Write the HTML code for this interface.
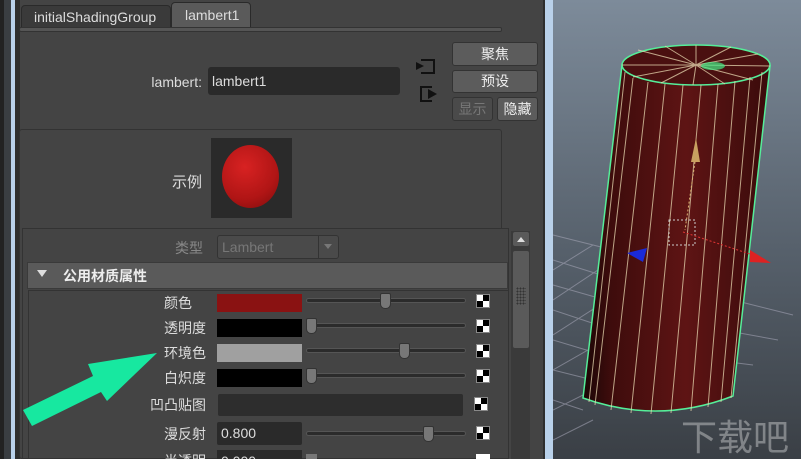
<!DOCTYPE html>
<html><head><meta charset="utf-8"><style>
*{margin:0;padding:0;box-sizing:border-box}
html{width:801px;height:459px;overflow:hidden}
body{width:801px;height:459px;overflow:hidden;background:#444;font-family:"Liberation Sans","Noto Sans CJK SC",sans-serif;position:relative;color:#ddd}
.a{position:absolute}
.lbl{position:absolute;font-size:14px;color:#ddd;text-align:right;width:120px}
.sw{position:absolute;left:217px;width:85px;height:18px}
.sl{position:absolute;left:306px;width:160px;height:5px;background:#2b2b2b;border:1px solid #555;border-radius:3px}
.kn{position:absolute;width:11px;height:16px;background:#777;border:1px solid #333;border-radius:2px 2px 5px 5px}
.ck{position:absolute;left:476px;width:14px;height:14px;background:conic-gradient(#000 0 25%,#fff 0 50%,#000 0 75%,#fff 0);border:1px solid #888}
.btn{position:absolute;background:#5c5c5c;border:1px solid #333;border-radius:3px;font-size:14px;text-align:center;color:#eee}
</style></head><body>
<div class="a" style="left:0;top:0;width:4px;height:459px;background:#222"></div>
<div class="a" style="left:4px;top:0;width:7px;height:459px;background:#3a3e42"></div>
<div class="a" style="left:11px;top:0;width:4px;height:459px;background:#b9d1ea"></div>
<div class="a" style="left:15px;top:0;width:5px;height:459px;background:#2e2e2e"></div>
<div class="a" style="left:21px;top:5px;width:150px;height:23px;background:#3a3a3a;border:1px solid #2a2a2a;border-radius:4px 4px 0 0;font-size:14px;padding:3px 0 0 12px;color:#ddd">initialShadingGroup</div>
<div class="a" style="left:171px;top:2px;width:80px;height:26px;background:#5a5a5a;border:1px solid #2a2a2a;border-radius:4px 4px 0 0;font-size:14px;padding:4px 0 0 13px;color:#ddd">lambert1</div>
<div class="a" style="left:19px;top:27px;width:483px;height:5px;background:#555;border:1px solid #333;border-radius:2px"></div>
<div class="a" style="left:130px;top:74px;font-size:14px;width:72px;text-align:right">lambert:</div>
<div class="a" style="left:208px;top:67px;width:192px;height:28px;background:#2a2a2a;border-radius:3px;font-size:14px;padding:6px 0 0 4px">lambert1</div>
<div class="a" style="left:421px;top:59px;width:14px;height:15px;border:2px solid #111;border-left:none"></div>
<div class="a" style="left:416px;top:62px;width:0;height:0;border-left:8px solid #111;border-top:4px solid transparent;border-bottom:4px solid transparent"></div>
<div class="a" style="left:420px;top:86px;width:12px;height:16px;border:2px solid #111;border-right:none"></div>
<div class="a" style="left:428px;top:89px;width:0;height:0;border-left:9px solid #111;border-top:5px solid transparent;border-bottom:5px solid transparent"></div>
<div class="btn" style="left:452px;top:42px;width:86px;height:24px;line-height:22px">聚焦</div>
<div class="btn" style="left:452px;top:70px;width:86px;height:23px;line-height:21px">预设</div>
<div class="btn" style="left:452px;top:97px;width:41px;height:24px;line-height:22px;background:#4a4a4a;color:#777">显示</div>
<div class="btn" style="left:497px;top:97px;width:41px;height:24px;line-height:22px">隐藏</div>
<div class="a" style="left:543px;top:0;width:2px;height:459px;background:#2e2e2e"></div>
<div class="a" style="left:545px;top:0;width:8px;height:459px;background:#b9d1ea"></div>
<div class="a" style="left:19px;top:129px;width:483px;height:330px;border:1px solid #333;border-radius:3px;background:#444"></div>
<div class="a" style="left:172px;top:171px;font-size:15px">示例</div>
<div class="a" style="left:211px;top:138px;width:81px;height:80px;background:#2a2a2a"></div>
<div class="a" style="left:222px;top:145px;width:57px;height:63px;border-radius:50%;background:radial-gradient(circle at 40% 35%,#d82222,#b01515 60%,#7a0c0c)"></div>
<div class="a" style="left:22px;top:228px;width:487px;height:231px;border:1px solid #333;background:#444"></div>
<div class="a" style="left:175px;top:238px;font-size:14px;color:#888">类型</div>
<div class="a" style="left:217px;top:235px;width:122px;height:24px;border:1px solid #333;border-radius:3px;background:#4a4a4a;color:#777;font-size:14px;padding:3px 0 0 4px">Lambert</div>
<div class="a" style="left:318px;top:236px;width:1px;height:22px;background:#333"></div>
<div class="a" style="left:324px;top:244px;border-top:5px solid #777;border-left:4px solid transparent;border-right:4px solid transparent"></div>
<div class="a" style="left:27px;top:262px;width:481px;height:27px;background:#5a5a5a;border:1px solid #3a3a3a"></div>
<div class="a" style="left:37px;top:270px;border-top:7px solid #ddd;border-left:5px solid transparent;border-right:5px solid transparent"></div>
<div class="a" style="left:63px;top:266px;font-size:14px;font-weight:bold;color:#eee">公用材质属性</div>
<div class="a" style="left:28px;top:290px;width:480px;height:169px;border-left:1px solid #333;border-top:1px solid #333"></div>
<div class="a" style="left:511px;top:231px;width:19px;height:228px;background:#3a3a3a"></div>
<div class="a" style="left:513px;top:232px;width:16px;height:14px;background:#5a5a5a;border-radius:2px"></div>
<div class="a" style="left:517px;top:237px;border-bottom:5px solid #ddd;border-left:4px solid transparent;border-right:4px solid transparent"></div>
<div class="a" style="left:513px;top:251px;width:16px;height:97px;background:#5a5a5a;border-radius:2px"></div>
<div class="a" style="left:516px;top:287px;width:10px;height:18px;background:radial-gradient(#333 40%,transparent 45%) 0 0/3px 3px"></div>

<div class="lbl" style="left:72px;top:293px">颜色</div>
<div class="sw" style="top:294px;background:#8a1212"></div>
<div class="sl" style="top:298px"></div><div class="kn" style="left:380px;top:293px"></div>
<div class="ck" style="top:294px"></div>

<div class="lbl" style="left:86px;top:318px">透明度</div>
<div class="sw" style="top:319px;background:#000"></div>
<div class="sl" style="top:323px"></div><div class="kn" style="left:306px;top:318px"></div>
<div class="ck" style="top:319px"></div>

<div class="lbl" style="left:86px;top:343px">环境色</div>
<div class="sw" style="top:344px;background:#a0a0a0"></div>
<div class="sl" style="top:348px"></div><div class="kn" style="left:399px;top:343px"></div>
<div class="ck" style="top:344px"></div>

<div class="lbl" style="left:86px;top:368px">白炽度</div>
<div class="sw" style="top:369px;background:#000"></div>
<div class="sl" style="top:373px"></div><div class="kn" style="left:306px;top:368px"></div>
<div class="ck" style="top:369px"></div>

<div class="lbl" style="left:86px;top:395px">凹凸贴图</div>
<div class="a" style="left:218px;top:394px;width:245px;height:22px;background:#2d2d2d;border-radius:2px"></div>
<div class="ck" style="top:397px;left:474px"></div>

<div class="lbl" style="left:86px;top:424px">漫反射</div>
<div class="a" style="left:217px;top:422px;width:85px;height:23px;background:#2a2a2a;border-radius:2px;font-size:14px;padding:3px 0 0 4px">0.800</div>
<div class="sl" style="top:431px"></div><div class="kn" style="left:423px;top:426px"></div>
<div class="ck" style="top:426px"></div>

<div class="lbl" style="left:86px;top:451px">半透明</div>
<div class="a" style="left:217px;top:450px;width:85px;height:9px;overflow:hidden;background:#2a2a2a;font-size:14px;padding:3px 0 0 4px">0.000</div>
<div class="a" style="left:306px;top:454px;width:11px;height:5px;background:#777"></div>
<div class="a" style="left:476px;top:454px;width:14px;height:5px;background:#fff"></div>
<svg class="a" style="left:0;top:0" width="550" height="459"><polygon points="23,410 93,376 88,364 157,353 107,401 101,392 32,426" fill="#17e8a0"/></svg>
<svg class="a" style="left:553px;top:0" width="248" height="459">
<defs><linearGradient id="bg" x1="0" y1="0" x2="0" y2="1"><stop offset="0" stop-color="#7d8b9a"/><stop offset=".55" stop-color="#56606b"/><stop offset="1" stop-color="#3a3f45"/></linearGradient>
<linearGradient id="cy" x1="0" y1="0" x2="1" y2="0"><stop offset="0" stop-color="#1a0606"/><stop offset=".15" stop-color="#3e0c0c"/><stop offset=".55" stop-color="#5e1414"/><stop offset="1" stop-color="#3a0b0b"/></linearGradient></defs>
<rect width="248" height="459" fill="url(#bg)"/>
<g stroke="#aab" stroke-width="1" opacity=".55" fill="none">
<path d="M0 235 L60 250 M0 260 L80 285 M0 285 L70 305 M0 310 L60 330 M0 340 L50 355 M0 370 L40 380 M0 400 L30 410"/>
<path d="M0 270 L40 245 M0 300 L60 260 M0 335 L70 290 M0 370 L70 330 M0 410 L60 380 M0 440 L40 420"/>
<path d="M180 300 L240 315 M170 330 L225 340 M160 360 L200 365 M180 310 L130 350"/>
</g>
<path d="M69 65 L30 398 Q105 425 180 396 L217 66 Z" fill="url(#cy)" stroke="#5e9" stroke-width="1.5"/>
<ellipse cx="143" cy="65" rx="74" ry="20" fill="#4a1010" stroke="#5e9" stroke-width="1.5"/>
<g stroke="#e8d8b0" stroke-width="1" opacity=".75">
<path d="M80 78 L42 405 M95 82 L58 410 M112 84 L78 413 M130 85 L98 414 M148 85 L118 413 M165 84 L138 411 M182 81 L155 407 M197 77 L168 402 M209 72 L178 398 M72 72 L36 402"/>
<path d="M143 65 L69 65 M143 65 L85 50 M143 65 L112 46 M143 65 L143 45 M143 65 L178 47 M143 65 L205 54 M143 65 L217 66 M143 65 L200 80 M143 65 L172 84 M143 65 L140 85 M143 65 L108 83 M143 65 L80 77"/>
</g>
<ellipse cx="160" cy="66" rx="12" ry="4" fill="#4e8" opacity=".7"/>
<path d="M143 138 L147 162 L138 162 Z" fill="#c9a060"/>
<path d="M142 162 L132 230" stroke="#d9b070" stroke-dasharray="2 2"/>
<rect x="116" y="220" width="26" height="25" fill="none" stroke="#ccc" stroke-dasharray="2 2"/>
<path d="M130 232 L200 255" stroke="#d33" stroke-dasharray="2 2"/>
<path d="M197 250 L218 263 L197 262 Z" fill="#d22"/>
<path d="M74 253 L94 248 L90 262 Z" fill="#1a2ad8"/>
<text x="128" y="450" font-size="36" fill="#fff" opacity=".35" font-family="Noto Sans CJK SC,sans-serif">下载吧</text>
</svg>
</body></html>
